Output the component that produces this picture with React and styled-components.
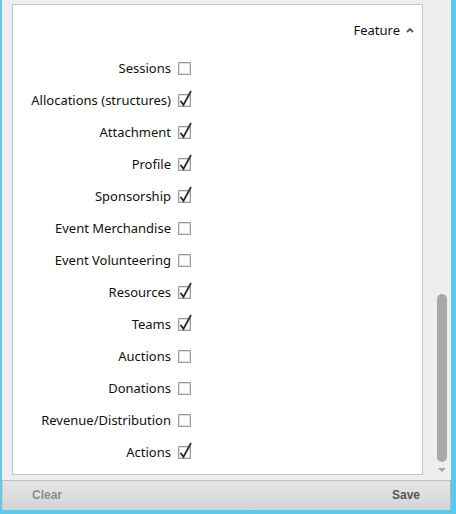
import React from "react";
import styled, { createGlobalStyle } from "styled-components";

const Global = createGlobalStyle`
  html, body { margin: 0; padding: 0; }
  body {
    background: #5ec8e8;
    width: 456px;
    height: 514px;
    overflow: hidden;
    font-family: "Noto Sans", "Open Sans", sans-serif;
  }
`;

const Frame = styled.div`
  margin-left: 2px;
  width: 449px;
  height: 510px;
  background: #eeeeee;
  display: flex;
  flex-direction: column;
`;

const Body = styled.div`
  height: 480px;
  display: flex;
  box-sizing: border-box;
  padding: 4px 0 5px 10px;
`;

const Panel = styled.div`
  width: 411px;
  height: 471px;
  box-sizing: border-box;
  background: #fff;
  border: 1px solid #c6c6c6;
  display: flex;
  flex-direction: column;
`;

const Header = styled.div`
  margin-top: 15px;
  height: 20px;
  display: flex;
  align-items: center;
  justify-content: flex-end;
  padding-right: 8px;
  gap: 6px;
  font-size: 13px;
  color: #111;
`;

const List = styled.div`
  margin-top: 12px;
  display: grid;
  grid-template-columns: 158px 13px;
  column-gap: 7px;
`;

const Label = styled.div`
  height: 32px;
  display: flex;
  align-items: center;
  justify-content: flex-end;
  font-size: 13px;
  color: #111;
  white-space: nowrap;
`;

const BoxCell = styled.div`
  height: 32px;
  display: flex;
  align-items: center;
`;

const Box = styled.div`
  position: relative;
  width: 13px;
  height: 13px;
  box-sizing: border-box;
  border: 1px solid #9c9c9c;
  background: #fff;
  box-shadow: inset 0 0 0 1px #dedede;
`;

const Check = styled.svg`
  position: absolute;
  left: -1px;
  top: -1px;
  overflow: visible;
`;

const ScrollTrack = styled.div`
  width: 10px;
  margin-left: 14px;
  height: 100%;
  display: flex;
  flex-direction: column;
  align-items: center;
`;

const Thumb = styled.div`
  margin-top: 290px;
  width: 10px;
  height: 168px;
  border-radius: 5px;
  background: #a8a8a8;
`;

const Arrow = styled.div`
  margin-top: 6px;
  width: 0;
  height: 0;
  border-left: 4px solid transparent;
  border-right: 4px solid transparent;
  border-top: 4px solid #a4a4a4;
`;

const Footer = styled.div`
  height: 30px;
  box-sizing: border-box;
  border-top: 1px solid #c2c2c2;
  border-left: 1px solid #cfcfcf;
  border-right: 1px solid #b8b8b8;
  background: linear-gradient(#e6e6e6, #d3d3d3);
  display: flex;
  align-items: center;
  justify-content: space-between;
  padding: 0 30px 1px 29px;
  font-family: "Liberation Sans", Arial, sans-serif;
  font-weight: bold;
  font-size: 12px;
`;

const FooterButton = styled.span`
  color: ${(p) => (p.$disabled ? "#8f8f8f" : "#555555")};
`;

const items = [
  ["Sessions", false],
  ["Allocations (structures)", true],
  ["Attachment", true],
  ["Profile", true],
  ["Sponsorship", true],
  ["Event Merchandise", false],
  ["Event Volunteering", false],
  ["Resources", true],
  ["Teams", true],
  ["Auctions", false],
  ["Donations", false],
  ["Revenue/Distribution", false],
  ["Actions", true],
];

function Checkbox({ checked }) {
  return (
    <BoxCell>
      <Box>
        {checked && (
          <Check width="13" height="13" viewBox="0 0 13 13">
            <path d="M2.6 6.8 L5.4 11 L13 -3" fill="none" stroke="#2e2e2e" strokeWidth="1.8" />
          </Check>
        )}
      </Box>
    </BoxCell>
  );
}

export default function App() {
  return (
    <>
      <Global />
      <Frame>
        <Body>
          <Panel>
            <Header>
              <span>Feature</span>
              <svg width="8" height="6" viewBox="0 0 8 6">
                <path d="M1 5 L4 2 L7 5" fill="none" stroke="#555" strokeWidth="1.8" />
              </svg>
            </Header>
            <List>
              {items.map(([name, checked]) => (
                <React.Fragment key={name}>
                  <Label>{name}</Label>
                  <Checkbox checked={checked} />
                </React.Fragment>
              ))}
            </List>
          </Panel>
          <ScrollTrack>
            <Thumb />
            <Arrow />
          </ScrollTrack>
        </Body>
        <Footer>
          <FooterButton $disabled>Clear</FooterButton>
          <FooterButton>Save</FooterButton>
        </Footer>
      </Frame>
    </>
  );
}
